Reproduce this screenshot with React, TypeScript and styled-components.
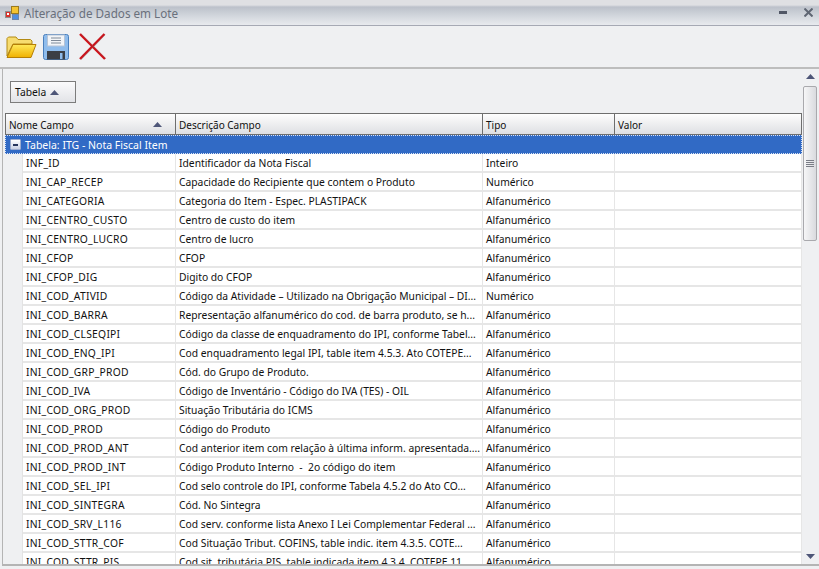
import React from "react";
import styled, { createGlobalStyle } from "styled-components";

const Global = createGlobalStyle`
  html, body { margin: 0; padding: 0; background: #eff0f2; overflow: hidden; }
  #root { width: 819px; height: 569px; }
`;
const Win = styled.div`
  width: 819px; height: 569px; display: flex; flex-direction: column; overflow: hidden;
  background: #eff0f2; font-family: "Noto Sans", "Liberation Sans", sans-serif; font-size: 10.3px; color: #111;
`;
const TitleBar = styled.div`
  height: 26px; box-sizing: border-box; flex: none; display: flex; align-items: center; padding: 0 0 0 5px; gap: 5px;
  background: linear-gradient(#dfe0e3 0, #dfe0e3 5px, #bcc1ca 7px, #d5d9df 17px, #e8eaee 25px);
  border-bottom: 1px solid #a6a9b4;
`;
const Title = styled.span`
  font-size: 11.7px; color: #6a707c; flex: 1;
`;
const WinBtns = styled.div`
  display: flex; align-items: center; gap: 17px; padding-right: 6px;
`;
const Toolbar = styled.div`
  height: 43px; box-sizing: border-box; flex: none; display: flex; align-items: center; gap: 6px; padding: 0 0 0 6px;
  border-bottom: 2px solid #bdbdbd;
`;
const Body = styled.div`
  flex: 1; min-height: 0; display: flex; margin: 0 0 3px 2px; border-left: 1px solid #b4b4b4; border-bottom: 2px solid #b4b4b4; box-sizing: border-box;
  padding-left: 2px;
`;
const Main = styled.div`
  flex: 1; min-width: 0; display: flex; flex-direction: column;
`;
const GroupPanel = styled.div`
  height: 44px; flex: none; box-sizing: border-box; padding: 12px 0 0 5px;
`;
const GroupChip = styled.div`
  width: 66px; height: 22px; box-sizing: border-box; border: 1px solid #7c7c7c;
  background: linear-gradient(#fbfbfc, #e2e3e7); display: flex; align-items: center; gap: 4px; padding-left: 4px; font-size: 10.3px;
`;
const Grid = styled.div`
  flex: 1; min-height: 0; overflow: hidden;
`;
const Header = styled.div`
  height: 22px; box-sizing: border-box; display: grid; grid-template-columns: 170px 307px 132px 1fr;
  border: 1px solid #6e6e6e; background: linear-gradient(#fefefe, #f4f4f5 30%, #dedfe3); font-size: 10px;
`;
const HeadCell = styled.div`
  display: flex; align-items: center; justify-content: space-between; padding: 1px 13px 0 3px; border-right: 1px solid #6e6e6e;
  &:last-child { border-right: 0; }
`;
const GroupRow = styled.div`
  height: 19px; box-sizing: border-box; background: #316ac5; color: #fff; display: flex; align-items: center;
  gap: 4px; padding-left: 4px; border: 1px dotted #d8e2f4; font-size: 10.5px;
`;
const Minus = styled.span`
  width: 11px; height: 11px; box-sizing: border-box; border-radius: 1px; background: linear-gradient(#fff, #c9d0e4);
  display: flex; align-items: center; justify-content: center; border: 1px solid #9cacd0;
  &::after { content: ""; width: 5px; height: 2px; background: #26345c; }
`;
const Row = styled.div`
  height: 19px; box-sizing: border-box; display: grid; grid-template-columns: 18px 153px 307px 132px 1fr;
`;
const Indent = styled.div`
  background: #eff0f2;
  border-right: 1px solid #e3e3e3;
`;
const Cell = styled.div<{ $code?: boolean }>`
  background: #fff; border-right: 1px solid #e6e6e6; border-bottom: 2px solid #e6e6e6; padding: 0 0 0 3px;
  line-height: 18px; white-space: pre; overflow: hidden;
  letter-spacing: ${(p) => (p.$code ? "0.25px" : "0")};
`;
const Scroll = styled.div`
  width: 14px; flex: none; margin: 0 2px 0 1px; display: flex; flex-direction: column; align-items: center; padding: 5px 0;
`;
const Thumb = styled.div`
  width: 14px; height: 155px; margin-top: 7px; box-sizing: border-box; border: 1px solid #a9a9ad; border-radius: 2px;
  background: linear-gradient(90deg, #f6f6f7, #d9dade); display: flex; flex-direction: column; align-items: center; justify-content: center; gap: 1px;
`;
const Grip = styled.span`
  width: 8px; height: 1px; background: #7a7d86;
`;
const Fill = styled.div`flex: 1;`;

const Arrow = ({ down }: { down?: boolean }) => (
  <svg width="9" height="5" viewBox="0 0 9 5"><path d={down ? "M0 0H9L4.5 5Z" : "M4.5 0L9 5H0Z"} fill="#4e5678" /></svg>
);
const AppIcon = () => (
  <svg width="14" height="14" viewBox="0 0 14 14">
    <rect x="0.5" y="5.5" width="5" height="6" fill="#d8302a" stroke="#8d8d8d" />
    <rect x="6.5" y="0.5" width="7" height="7" fill="#f4c431" stroke="#9a7a20" />
    <rect x="7.5" y="8.5" width="6" height="5" fill="#4f8fe0" stroke="#6d86ad" />
    <rect x="2" y="7" width="2" height="2" fill="#fff" />
  </svg>
);
const FolderIcon = () => (
  <svg width="31" height="24" viewBox="0 0 31 24">
    <defs><linearGradient id="f" x1="0" y1="0" x2="0" y2="1"><stop offset="0" stopColor="#ffe95a" /><stop offset="1" stopColor="#f0b000" /></linearGradient></defs>
    <path d="M1 21V3.5L2.5 2H10L12 4.5H24.5L26 6V9H7L1 21Z" fill="#f7dc70" stroke="#b28a14" />
    <path d="M1 22.5L7 9.5H30L25 22.5Z" fill="url(#f)" stroke="#b57f06" strokeLinejoin="round" />
  </svg>
);
const SaveIcon = () => (
  <svg width="26" height="26" viewBox="0 0 26 26">
    <rect x="0.5" y="0.5" width="25" height="25" rx="2" fill="#8fbcec" stroke="#4a7fbc" />
    <rect x="4.5" y="1" width="17" height="11" fill="#f2f4f7" stroke="#b5c3d6" />
    <path d="M8 4H18M8 6.5H18M8 9H18" stroke="#7f8a98" />
    <rect x="4" y="17" width="18" height="8.5" fill="#3b3e45" />
    <rect x="17" y="19" width="2.5" height="6" fill="#8fbcec" />
  </svg>
);
const CloseIcon = () => (
  <svg width="31" height="27" viewBox="-4 0 31 27">
    <path d="M1 1L26 26" stroke="#d01018" strokeWidth="2.4" />
    <path d="M25.5 1L1 26" stroke="#c8141c" strokeWidth="2.4" />
    <path d="M2 1L27 26M26 2L2 27" stroke="#7a7a7a" strokeWidth=".5" opacity=".6" />
  </svg>
);
const MinIcon = () => <svg width="8" height="3" viewBox="0 0 8 3"><rect width="8" height="3" fill="#515766" /></svg>;
const XIcon = () => (
  <svg width="9" height="9" viewBox="0 0 9 9"><path d="M.5 .5L8.5 8.5M8.5 .5L.5 8.5" stroke="#5f6673" strokeWidth="2" /></svg>
);

const A = "Alfanumérico";
const rows: [string, string, string][] = [
  ["INF_ID", "Identificador da Nota Fiscal", "Inteiro"],
  ["INI_CAP_RECEP", "Capacidade do Recipiente que contem o Produto", "Numérico"],
  ["INI_CATEGORIA", "Categoria do Item - Espec. PLASTIPACK", A],
  ["INI_CENTRO_CUSTO", "Centro de custo do item", A],
  ["INI_CENTRO_LUCRO", "Centro de lucro", A],
  ["INI_CFOP", "CFOP", A],
  ["INI_CFOP_DIG", "Digito do CFOP", A],
  ["INI_COD_ATIVID", "Código da Atividade – Utilizado na Obrigação Municipal – DI...", "Numérico"],
  ["INI_COD_BARRA", "Representação alfanumérico do cod. de barra produto, se h...", A],
  ["INI_COD_CLSEQIPI", "Código da classe de enquadramento do IPI, conforme Tabel...", A],
  ["INI_COD_ENQ_IPI", "Cod enquadramento legal IPI, table item 4.5.3. Ato COTEPE...", A],
  ["INI_COD_GRP_PROD", "Cód. do Grupo de Produto.", A],
  ["INI_COD_IVA", "Código de Inventário - Código do IVA (TES) - OIL", A],
  ["INI_COD_ORG_PROD", "Situação Tributária do ICMS", A],
  ["INI_COD_PROD", "Código do Produto", A],
  ["INI_COD_PROD_ANT", "Cod anterior item com relação à última inform. apresentada....", A],
  ["INI_COD_PROD_INT", "Código Produto Interno  -  2o código do item", A],
  ["INI_COD_SEL_IPI", "Cod selo controle do IPI, conforme Tabela 4.5.2 do Ato CO...", A],
  ["INI_COD_SINTEGRA", "Cód. No Sintegra", A],
  ["INI_COD_SRV_L116", "Cod serv. conforme lista Anexo I Lei Complementar Federal ...", A],
  ["INI_COD_STTR_COF", "Cod Situação Tribut. COFINS, table indic. item 4.3.5. COTE...", A],
  ["INI_COD_STTR_PIS", "Cod sit. tributária PIS, table indicada item 4.3.4. COTEPE 11...", A],
];

export default function App() {
  return (
    <Win>
      <Global />
      <TitleBar>
        <AppIcon />
        <Title>Alteração de Dados em Lote</Title>
        <WinBtns><MinIcon /><XIcon /></WinBtns>
      </TitleBar>
      <Toolbar>
        <FolderIcon /><SaveIcon /><CloseIcon />
      </Toolbar>
      <Body>
        <Main>
          <GroupPanel>
            <GroupChip>Tabela <Arrow /></GroupChip>
          </GroupPanel>
          <Grid>
            <Header>
              <HeadCell>Nome Campo <Arrow /></HeadCell>
              <HeadCell>Descrição Campo</HeadCell>
              <HeadCell>Tipo</HeadCell>
              <HeadCell>Valor</HeadCell>
            </Header>
            <GroupRow><Minus />Tabela: ITG - Nota Fiscal Item</GroupRow>
            {rows.map((r) => (
              <Row key={r[0]}>
                <Indent />
                <Cell $code>{r[0]}</Cell>
                <Cell>{r[1]}</Cell>
                <Cell>{r[2]}</Cell>
                <Cell />
              </Row>
            ))}
          </Grid>
        </Main>
        <Scroll>
          <Arrow />
          <Thumb><Grip /><Grip /><Grip /><Grip /></Thumb>
          <Fill />
          <Arrow down />
        </Scroll>
      </Body>
    </Win>
  );
}
